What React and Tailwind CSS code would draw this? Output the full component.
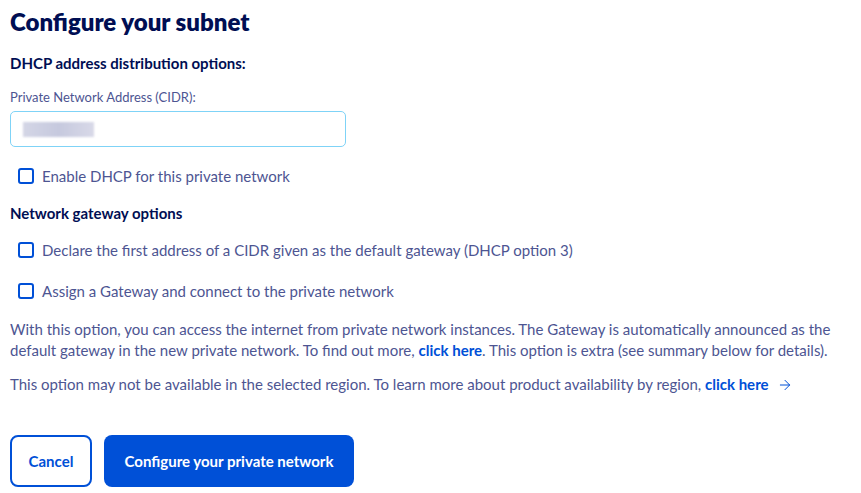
import { ArrowRight } from 'lucide-react'

function Check({ label }) {
  return (
    <label className="flex items-center gap-2 pl-2 text-[15px] leading-[18px] text-[#4d5592]">
      <span className="h-4 w-4 shrink-0 rounded-[3px] border-2 border-[#0050d7] bg-white" />
      <span>{label}</span>
    </label>
  )
}

export default function App() {
  return (
    <div className="min-h-[493px] bg-white px-[10px] pt-[6px] font-['Lato',sans-serif] text-[#4d5592]">
      <h1 className="text-[24px] font-extrabold leading-[32px] text-[#000e53]">Configure your subnet</h1>

      <h2 className="mt-[15px] text-[15px] font-bold leading-5 text-[#000e53]">DHCP address distribution options:</h2>

      <p className="mt-[16px] text-[13px] leading-4">Private Network Address (CIDR):</p>
      <div className="mt-[6px] flex h-[36px] w-[336px] items-center rounded-[5px] border border-[#7fd3f7] px-3">
        <div className="h-[15px] w-[71px] bg-gradient-to-r from-[#d4d6e6] via-[#c6c9de] to-[#d8d9e8] blur-[1px]" />
      </div>

      <div className="mt-[20px]">
        <Check label="Enable DHCP for this private network" />
      </div>

      <h2 className="mt-[18px] text-[15px] font-bold leading-5 text-[#000e53]">Network gateway options</h2>

      <div className="mt-[18px] flex flex-col gap-[23px]">
        <Check label="Declare the first address of a CIDR given as the default gateway (DHCP option 3)" />
        <Check label="Assign a Gateway and connect to the private network" />
      </div>

      <p className="mt-[19px] text-[15px] leading-[21px]">
        With this option, you can access the internet from private network instances. The Gateway is automatically announced as the default gateway in the new private network. To find out more, <a className="font-bold text-[#0050d7]">click here</a>. This option is extra (see summary below for details).
      </p>

      <p className="mt-[13px] flex items-center text-[15px] leading-[21px]">
        <span>
          This option may not be available in the selected region. To learn more about product availability by region, <a className="font-bold text-[#0050d7]">click here</a>
        </span>
        <ArrowRight className="ml-2 h-4 w-4 text-[#0050d7]" strokeWidth={1.5} />
      </p>

      <div className="mt-[40px] flex gap-3">
        <button className="h-[52px] w-[82px] rounded-lg border-2 border-[#0050d7] bg-white text-[15px] font-bold text-[#0050d7]">Cancel</button>
        <button className="h-[52px] w-[250px] rounded-lg bg-[#0050d7] text-[15px] font-bold text-white">Configure your private network</button>
      </div>
    </div>
  )
}
